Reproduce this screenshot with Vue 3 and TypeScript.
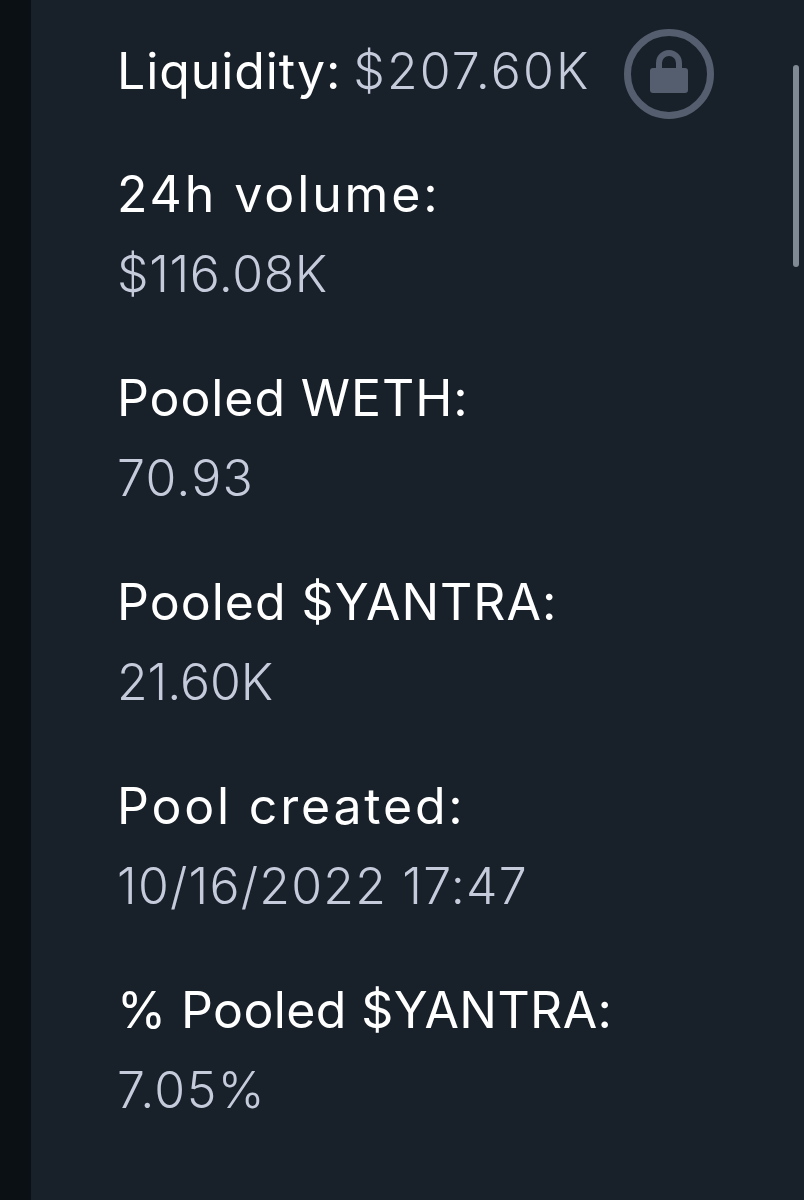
<script setup lang="ts">
interface Stat {
  label: string;
  value: string;
  labelTrack: number;
  valueTrack: number;
}

const stats: Stat[] = [
  { label: "24h volume:", value: "$116.08K", labelTrack: 2.9, valueTrack: 0.6 },
  { label: "Pooled WETH:", value: "70.93", labelTrack: 0.9, valueTrack: 1.2 },
  { label: "Pooled $YANTRA:", value: "21.60K", labelTrack: 1, valueTrack: -0.1 },
  { label: "Pool created:", value: "10/16/2022 17:47", labelTrack: 2.8, valueTrack: 1.2 },
  { label: "% Pooled $YANTRA:", value: "7.05%", labelTrack: 0.4, valueTrack: 1.4 },
];
</script>

<template>
  <div class="screen">
    <div class="rail"></div>
    <main class="panel">
      <div class="liquidity">
        <span class="label" style="letter-spacing: 0.9px">Liquidity:</span>
        <span class="value" style="letter-spacing: 2.15px">$207.60K</span>
        <svg class="lock" viewBox="0 0 92 92" width="92" height="92" aria-hidden="true">
          <circle cx="46" cy="46" r="41.5" fill="none" stroke="#545e6e" stroke-width="7" />
          <path d="M36 42V35a10 10 0 0 1 20 0v7" fill="none" stroke="#545e6e" stroke-width="6" />
          <rect x="27" y="40" width="38" height="25" rx="3" fill="#545e6e" />
        </svg>
      </div>
      <section v-for="stat in stats" :key="stat.label" class="stat">
        <div class="label" :style="{ letterSpacing: stat.labelTrack + 'px' }">{{ stat.label }}</div>
        <div class="value" :style="{ letterSpacing: stat.valueTrack + 'px' }">{{ stat.value }}</div>
      </section>
      <div class="scrollbar"></div>
    </main>
  </div>
</template>

<style scoped>
.screen {
  display: flex;
  width: 804px;
  height: 1200px;
  overflow: hidden;
  background: #182029;
  font-family: Inter, "Open Sans", sans-serif;
  font-feature-settings: "calt" 0;
}

.rail {
  width: 31px;
  flex: none;
  background: #0b1014;
}

.panel {
  position: relative;
  flex: 1;
  padding: 28px 0 0 86px;
}

.liquidity {
  display: flex;
  align-items: flex-start;
  height: 92px;
  margin-bottom: 34px;
}

.liquidity .label,
.liquidity .value {
  line-height: 86px;
}

.liquidity .value {
  margin-left: 12px;
}

.lock {
  margin-left: 32px;
}

.stat {
  margin-bottom: 44px;
}

.label,
.value {
  font-size: 50px;
  line-height: 80px;
  font-weight: 400;
  white-space: nowrap;
}

.label {
  color: #ffffff;
}

.value {
  color: #c6cbdc;
  font-weight: 300;
}

.scrollbar {
  position: absolute;
  top: 65px;
  right: 5px;
  width: 6px;
  height: 202px;
  border-radius: 3px;
  background: #7f8a94;
}
</style>
